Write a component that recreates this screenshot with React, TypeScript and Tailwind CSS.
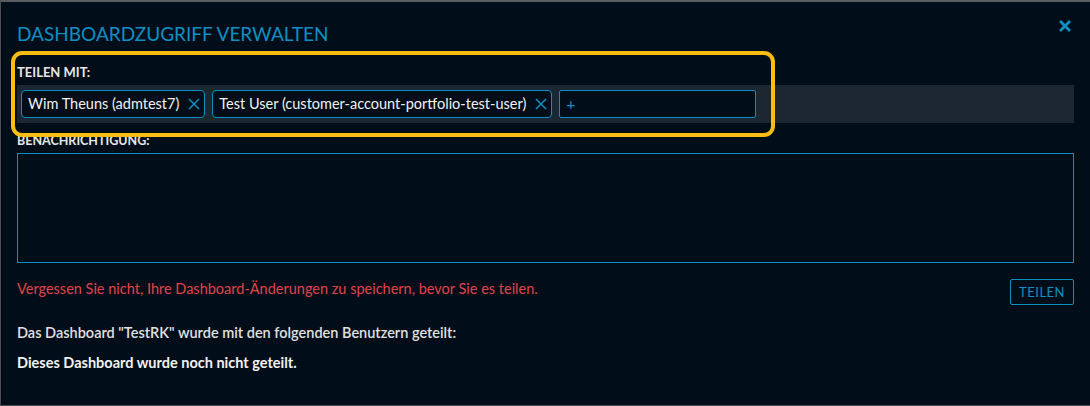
import React from "react";

const XIcon = ({ size = 12, stroke = 1.6 }: { size?: number; stroke?: number }) => (
  <svg width={size} height={size} viewBox="0 0 12 12" fill="none">
    <path d="M1 1L11 11M11 1L1 11" stroke="#0b8fc4" strokeWidth={stroke} strokeLinecap="butt" />
  </svg>
);

const Chip = ({ label }: { label: string }) => (
  <div className="flex items-center h-[28px] pl-[6px] pr-[4px] border border-[#0b8fc4] rounded-[4px] bg-[#010e1a] gap-[9px]">
    <span className="text-[14.5px] text-[#f2f2f2] leading-none">{label}</span>
    <XIcon size={12} stroke={1.5} />
  </div>
);

export default function App() {
  return (
    <div
      className="relative w-[1090px] h-[406px] bg-[#010e1a] border-t-2 border-t-[#5a5e63] border-l border-l-[#4a4e52] border-b border-b-[#4a4e52] overflow-hidden"
      style={{ fontFamily: "Lato, 'Liberation Sans', sans-serif" }}
    >
      <div className="flex flex-col pl-[16px] pr-[16px]">
        <div className="flex items-center justify-between h-[59px] pt-[3px]">
          <h1 className="text-[19px] text-[#0b8fc4] leading-none">DASHBOARDZUGRIFF VERWALTEN</h1>
          <div className="mr-[3px] mt-[-15px]">
            <XIcon size={12} stroke={2.8} />
          </div>
        </div>
        <div className="text-[13px] font-bold text-[#e6e6e6] leading-none h-[24px] pt-[5px]">TEILEN MIT:</div>
        <div className="flex items-center gap-[7px] h-[38px] bg-[#1c2731] px-[4px]">
          <Chip label="Wim Theuns (admtest7)" />
          <Chip label="Test User (customer-account-portfolio-test-user)" />
          <div className="flex items-center w-[197px] h-[28px] border border-[#0b8fc4] rounded-[2px] bg-[#010e1a] pl-[6px]">
            <span className="text-[16px] text-[#0b8fc4] leading-none">+</span>
          </div>
        </div>
        <div className="text-[12.5px] font-bold text-[#e6e6e6] leading-none h-[30px] pt-[12px]">BENACHRICHTIGUNG:</div>
        <div className="h-[110px] border border-[#0b8fc4] bg-[#010e1a]" />
        <div className="flex items-start justify-between mt-[16px]">
          <span className="text-[14.5px] text-[#e2434a] leading-none pt-[3px]">
            Vergessen Sie nicht, Ihre Dashboard-Änderungen zu speichern, bevor Sie es teilen.
          </span>
          <button className="h-[26px] px-[8px] border border-[#0b8fc4] rounded-[2px] text-[13px] tracking-[0.5px] text-[#0b8fc4] leading-none">
            TEILEN
          </button>
        </div>
        <div className="text-[14.5px] font-semibold text-[#e0e0e0] leading-none mt-[21px]">
          Das Dashboard "TestRK" wurde mit den folgenden Benutzern geteilt:
        </div>
        <div className="text-[14.5px] font-bold text-[#f2f2f2] leading-none mt-[15px]">
          Dieses Dashboard wurde noch nicht geteilt.
        </div>
      </div>
      <div className="absolute left-[10px] top-[49px] w-[764px] h-[86px] border-[4px] border-[#fbbd12] rounded-[11px] pointer-events-none" />
    </div>
  );
}
